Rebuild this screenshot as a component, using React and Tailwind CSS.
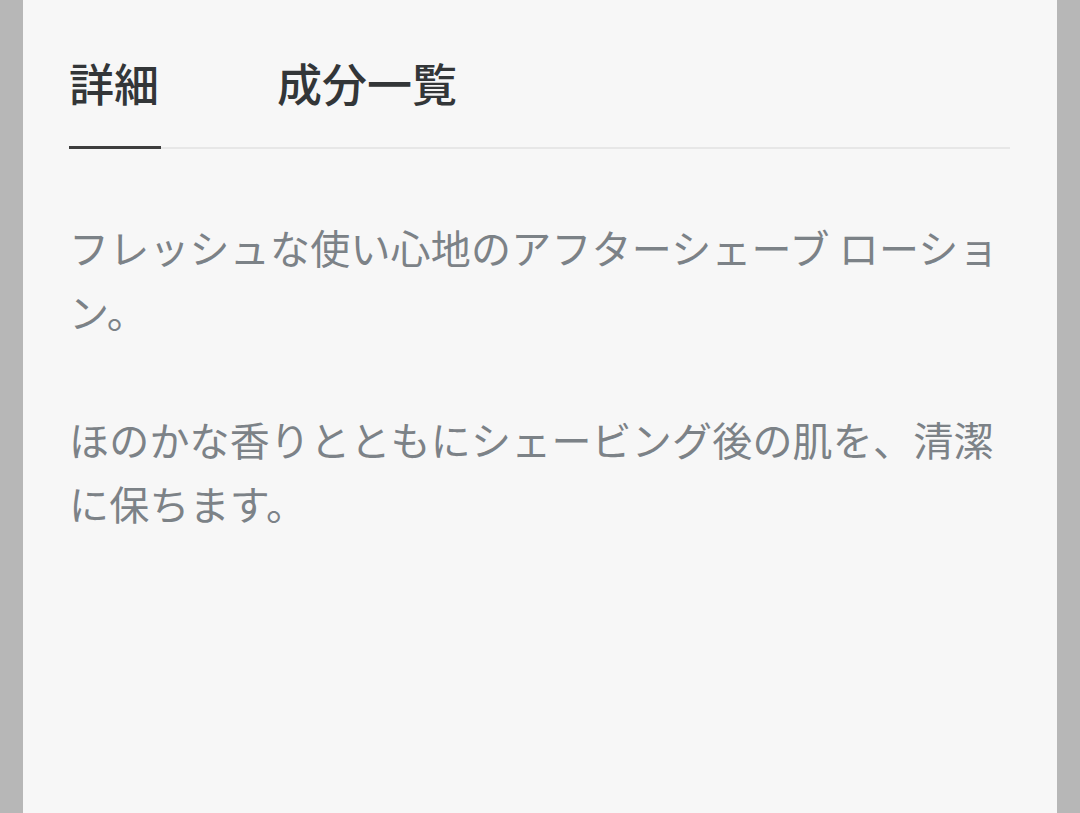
export default function App() {
    const paragraphs = [
        "フレッシュな使い心地のアフターシェーブ ローション。",
        "ほのかな香りとともにシェービング後の肌を、清潔に保ちます。",
    ];

    return (
        <div
            className="w-[1080px] h-[813px] bg-[#b7b7b7] pl-[23px] pr-[23px] overflow-hidden"
            style={{ fontFamily: '"Noto Sans CJK JP", "Noto Sans", sans-serif' }}
        >
            <div className="h-full bg-[#f7f7f7] pl-[46px] pr-[47px] pt-[53px]">

                {/* Tabs */}
                <div className="flex gap-[116px] border-b-2 border-[#e7e7e7]">
                    <div className="w-[92px] -mb-[2px] pb-[33px] border-b-[3px] border-[#3d3d3d] text-[45px] leading-[60px] font-medium text-[#333638]">
                        詳細
                    </div>
                    <div className="pb-[33px] text-[45px] leading-[60px] font-medium text-[#333638]">
                        成分一覧
                    </div>
                </div>

                {/* Descripción */}
                <div className="pt-[66px] text-[40px] tracking-[0.2px] leading-[64px] text-[#7c8287]">
                    {paragraphs.map((p, i) => (
                        <p key={i} className={i > 0 ? "mt-[64px]" : ""}>{p}</p>
                    ))}
                </div>
            </div>
        </div>
    );
}
